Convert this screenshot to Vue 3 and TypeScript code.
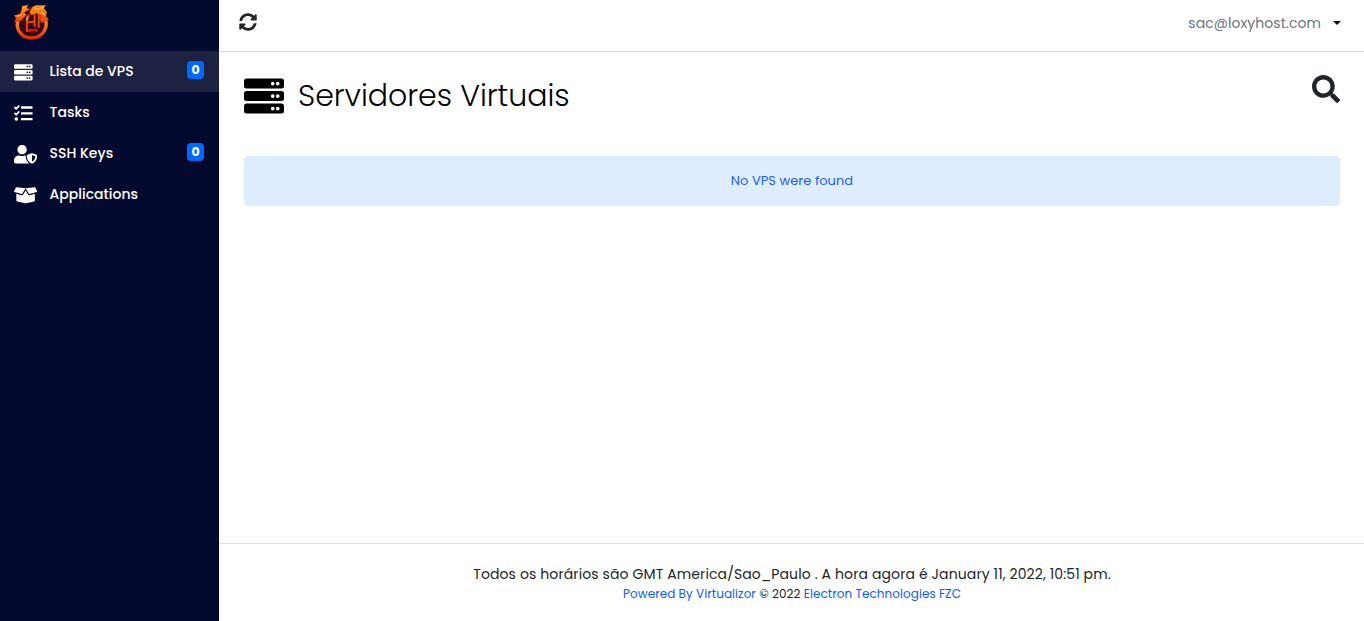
<script setup lang="ts">
interface NavItem {
  label: string
  box: string
  path: string
  wide: boolean
  count?: number
}

const unit = (y: number): string =>
  `M32 ${y}h448a32 32 0 0 1 32 32v64a32 32 0 0 1-32 32H32a32 32 0 0 1-32-32v-64a32 32 0 0 1 32-32z` +
  `M432 ${y + 40}a24 24 0 1 0 0 48 24 24 0 0 0 0-48zM368 ${y + 40}a24 24 0 1 0 0 48 24 24 0 0 0 0-48z`
const server: string = unit(32) + unit(192) + unit(352)

const items: NavItem[] = [
  { label: 'Lista de VPS', box: '0 0 512 512', path: server, wide: false, count: 0 },
  {
    label: 'Tasks', box: '0 0 512 512', wide: false,
    path: 'M139.61 35.5a12 12 0 0 0-17 0L58.93 98.81l-22.7-22.12a12 12 0 0 0-17 0L3.53 92.41a12 12 0 0 0 0 17l47.59 47.4a12.78 12.78 0 0 0 17.61 0l15.59-15.62L156.52 69a12.09 12.09 0 0 0 .09-17zm0 159.19a12 12 0 0 0-17 0l-63.68 63.72-22.7-22.1a12 12 0 0 0-17 0L3.53 252a12 12 0 0 0 0 17L51 316.5a12.77 12.77 0 0 0 17.6 0l15.7-15.69 72.2-72.22a12 12 0 0 0 .09-16.9zM64 368c-26.49 0-48.59 21.5-48.59 48S37.53 464 64 464a48 48 0 0 0 0-96zm432 16H208a16 16 0 0 0-16 16v32a16 16 0 0 0 16 16h288a16 16 0 0 0 16-16v-32a16 16 0 0 0-16-16zm0-320H208a16 16 0 0 0-16 16v32a16 16 0 0 0 16 16h288a16 16 0 0 0 16-16V80a16 16 0 0 0-16-16zm0 160H208a16 16 0 0 0-16 16v32a16 16 0 0 0 16 16h288a16 16 0 0 0 16-16v-32a16 16 0 0 0-16-16z',
  },
  {
    label: 'SSH Keys', box: '0 0 640 512', wide: true, count: 0,
    path: 'M622.3 271.1l-115.2-45c-4.1-1.6-12.6-3.7-22.2 0l-115.2 45c-10.7 4.2-17.7 14-17.7 24.9 0 111.6 68.7 188.8 132.9 213.9 9.6 3.7 18 1.6 22.2 0C558.4 489.9 640 420.5 640 296c0-10.9-7-20.7-17.7-24.9zM496 462.4V273.3l95.5 37.3c-5.6 87.1-60.9 135.4-95.5 151.8zM224 256c70.7 0 128-57.3 128-128S294.7 0 224 0 96 57.3 96 128s57.3 128 128 128zm96 40c0-2.5.8-4.8 1.1-7.2-2.5-.1-4.9-.8-7.5-.8h-16.7c-22.2 10.2-46.9 16-72.9 16s-50.6-5.8-72.9-16h-16.7C60.2 288 0 348.2 0 422.4V464c0 26.5 21.5 48 48 48h352c6.8 0 13.3-1.5 19.2-4-54-42.9-99.2-116.7-99.2-212z',
  },
  {
    label: 'Applications', box: '0 0 640 512', wide: true,
    path: 'M425.7 256c-16.9 0-32.8-9-41.4-23.4L320 126l-64.2 106.6c-8.7 14.5-24.6 23.5-41.5 23.5-4.5 0-9-.6-13.3-1.9L64 215v178c0 14.7 10 27.5 24.2 31l216.2 54.1c10.2 2.5 20.9 2.5 31 0L551.8 424c14.2-3.6 24.2-16.4 24.2-31V215l-137 39.1c-4.3 1.3-8.8 1.9-13.3 1.9zm212.6-112.2L586.8 41c-3.1-6.2-9.8-9.8-16.7-8.9L320 64l91.7 152.1c3.8 6.3 11.4 9.3 18.5 7.3l197.9-56.5c9.9-2.9 14.7-13.9 10.2-23.1zM53.2 41L1.7 143.8c-4.6 9.2.3 20.2 10.1 23l197.9 56.5c7.1 2 14.7-1 18.5-7.3L320 64 69.8 32.1c-6.9-.8-13.5 2.7-16.6 8.9z',
  },
]
</script>

<template>
  <div class="app">
    <aside class="sidebar">
      <div class="brand">
        <svg class="logo" viewBox="0 0 36 36">
          <defs>
            <linearGradient id="fire" x1="0" y1="0" x2="0" y2="1">
              <stop offset="0" stop-color="#f98f22" />
              <stop offset=".45" stop-color="#f4791c" />
              <stop offset="1" stop-color="#dc2f0c" />
            </linearGradient>
            <radialGradient id="glow">
              <stop offset=".8" stop-color="#8a1508" />
              <stop offset="1" stop-color="#8a1508" stop-opacity="0" />
            </radialGradient>
          </defs>
          <circle cx="18" cy="18.5" r="17" fill="url(#glow)" />
          <circle cx="18" cy="19" r="13" fill="#3a0712" />
          <path fill="none" stroke="url(#fire)" stroke-width="3.2" d="M7 12c-7 10 0 21 11 21s18-11 12-21" />
          <path fill="url(#fire)" d="M9 2l6-1-2 3 3 1-5 3 2 3-5 5-3 1-4 1 2-4-2-3 6-1 1-3zM19 3c4-3 7-1 13-2l-2 3 3 4-1 4 3 3-3 1-4 3-2-4 2-3-5-3-5 2-2-3z" />
          <path fill="none" stroke="#e8440f" stroke-width="2" d="M15.5 10l-2 7v9l8-1M14 18l7-1M21 10v12M25 10v13M25 13l4-1" />
          <path fill="none" stroke="#fbc03b" stroke-width="1.2" d="M9 4l4-1M4 12l4-2M21 4l4 1 5-2M28 8l3 3M14 12l-1 4" />
          <path fill="none" stroke="#d8120c" stroke-width="2" d="M14 26l8-1 2 2" />
        </svg>
      </div>
      <nav>
        <a v-for="(item, i) in items" :key="item.label" class="nav-item" :class="{ active: i === 0 }">
          <svg class="nav-icon" :class="{ wide: item.wide }" :viewBox="item.box"><path :d="item.path" fill="currentColor" /></svg>
          <span class="nav-label">{{ item.label }}</span>
          <span v-if="item.count !== undefined" class="badge">{{ item.count }}</span>
        </a>
      </nav>
    </aside>
    <div class="page">
      <header class="topbar">
        <svg class="sync" viewBox="0 0 512 512"><path fill="currentColor" d="M370.72 133.28C339.458 104.008 298.888 87.962 255.848 88c-77.458.068-144.328 53.178-162.791 126.85-1.344 5.363-6.122 9.15-11.651 9.15H24.103c-7.498 0-13.194-6.807-11.807-14.176C33.933 94.924 134.813 8 256 8c66.448 0 126.791 26.136 171.315 68.685L463.03 40.97C478.149 25.851 504 36.559 504 57.941V192c0 13.255-10.745 24-24 24H345.941c-21.382 0-32.09-25.851-16.971-40.971l41.75-41.749zM32 296h134.059c21.382 0 32.09 25.851 16.971 40.971l-41.75 41.75c31.262 29.273 71.835 45.319 114.876 45.28 77.418-.07 144.315-53.144 162.787-126.849 1.344-5.363 6.122-9.15 11.651-9.15h57.304c7.498 0 13.194 6.807 11.807 14.176C478.067 417.076 377.187 504 256 504c-66.448 0-126.791-26.136-171.315-68.685L48.97 471.03C33.851 486.149 8 475.441 8 454.059V320c0-13.255 10.745-24 24-24z" /></svg>
        <div class="account"><span class="email">sac@loxyhost.com</span><i class="caret"></i></div>
      </header>
      <main>
        <div class="heading">
          <svg class="server" viewBox="0 0 512 512"><path :d="server" /></svg>
          <h1>Servidores Virtuais</h1>
          <svg class="search" viewBox="0 0 512 512"><path fill="currentColor" d="M505 442.7L405.3 343c-4.5-4.5-10.6-7-17-7H372c27.6-35.3 44-79.7 44-128C416 93.1 322.9 0 208 0S0 93.1 0 208s93.1 208 208 208c48.3 0 92.7-16.4 128-44v16.3c0 6.4 2.5 12.5 7 17l99.7 99.7c9.4 9.4 24.6 9.4 33.9 0l28.3-28.3c9.4-9.4 9.4-24.6.1-34zM208 336c-70.7 0-128-57.2-128-128 0-70.7 57.2-128 128-128 70.7 0 128 57.2 128 128 0 70.7-57.2 128-128 128z" /></svg>
        </div>
        <div class="notice">No VPS were found</div>
      </main>
      <footer>
        <div class="clock">Todos os horários são GMT America/Sao_Paulo . A hora agora é January 11, 2022, 10:51 pm.</div>
        <div class="credits"><a>Powered By Virtualizor</a> © 2022 <a>Electron Technologies FZC</a></div>
      </footer>
    </div>
  </div>
</template>

<style>
body { background: #fff; }
</style>

<style scoped>
* { box-sizing: border-box; }
.app { display: flex; height: 621px; font-family: Poppins, Inter, sans-serif; font-size: 14px; color: #212529; overflow: hidden; white-space: nowrap; }
.sidebar { width: 219px; flex: none; background: #040a2f; color: #fff; }
.brand { height: 51px; padding: 4px 0 0 13px; }
.logo { display: block; width: 37px; height: 37px; }
.nav-item { display: flex; align-items: center; height: 41px; padding: 0 15px 0 14px; }
.nav-item.active { background: #1d2243; }
.nav-icon { width: 18.6px; height: 18.6px; margin: 2px 17px 0 0; flex: none; fill-rule: evenodd; }
.nav-icon.wide { width: 23.2px; margin-right: 12.4px; }
.nav-label { font-weight: 500; line-height: 20px; margin-bottom: 2px; }
.badge { margin: -3px 0 0 auto; width: 17px; height: 18px; border-radius: 4px; background: #0168fa; font-size: 12.5px; font-weight: 700; line-height: 18px; text-align: center; }
.page { flex: 1; display: flex; flex-direction: column; }
.topbar { height: 52px; border-bottom: 1px solid #dcdcdc; display: flex; align-items: center; padding: 0 23px 6px 20px; }
.sync { width: 18px; height: 18px; margin-bottom: 1px; }
.account { margin: 1px 0 0 auto; display: flex; align-items: center; }
.email { color: #6c757d; letter-spacing: .07px; margin-top: 1px; }
.caret { margin-left: 12px; border: 4px solid transparent; border-top-color: #02082c; border-bottom: 0; }
main { flex: 1; padding: 24px 24px 0 25px; }
.heading { display: flex; align-items: flex-start; height: 80px; }
.server { width: 40px; height: 40px; fill: #000; fill-rule: evenodd; }
h1 { margin: 0 0 0 14px; font-size: 30px; line-height: 40px; font-weight: 300; letter-spacing: -.03px; color: #000; }
.search { width: 28px; height: 28px; margin: -1px 0 0 auto; }
.notice { height: 50px; border-radius: 4px; background: #deedff; color: #1a5cff; font-size: 13px; line-height: 50px; text-align: center; letter-spacing: .05px; }
footer { height: 78px; border-top: 1px solid #dedede; text-align: center; padding: 20px 0 0 1px; }
.clock { line-height: 21px; letter-spacing: .115px; }
.credits { font-size: 12px; line-height: 18px; letter-spacing: .055px; }
.credits a { color: #0f5bff; }
</style>
